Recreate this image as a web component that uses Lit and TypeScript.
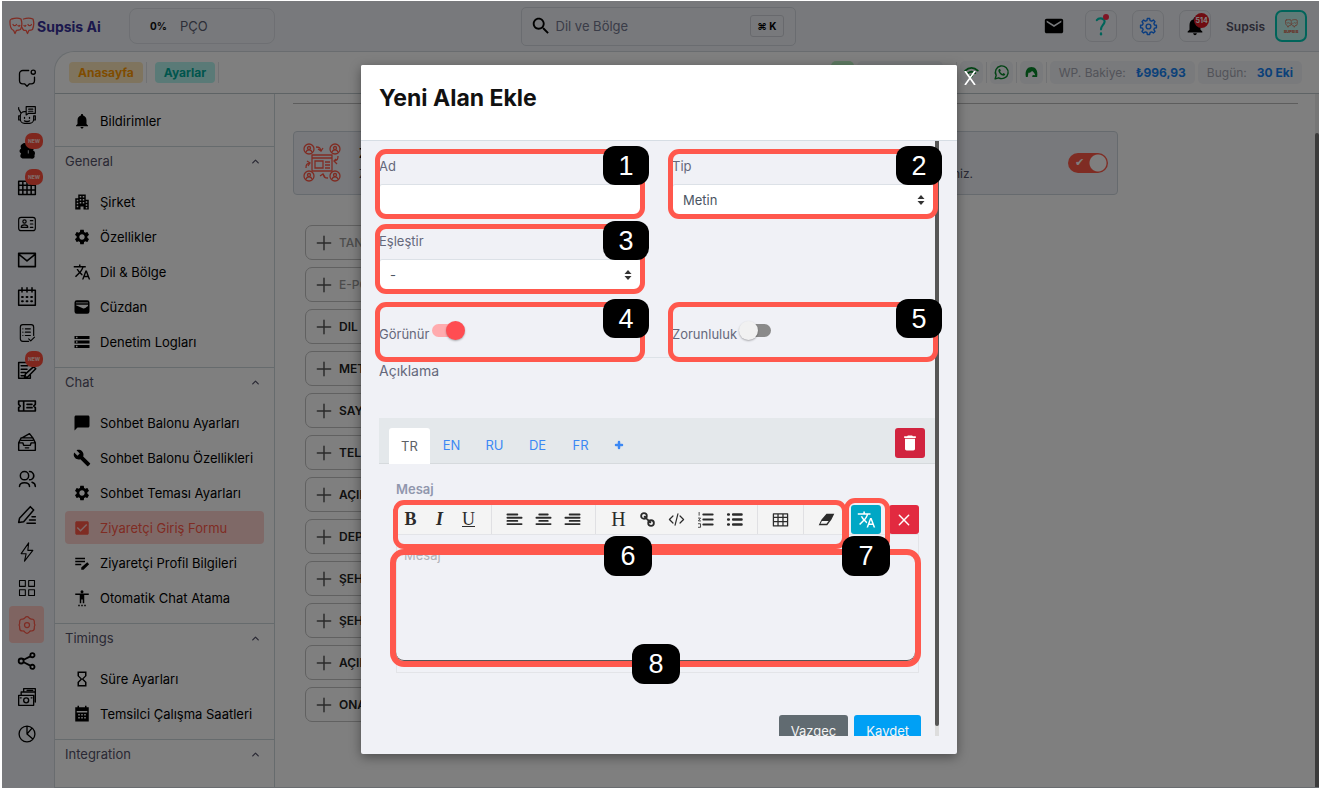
import { LitElement, html, svg, css } from "lit";
import { customElement, state } from "lit/decorators.js";

const fill = (d: string) => svg`<path fill="currentColor" fill-rule="evenodd" d=${d} />`;
const line = (d: string, w = 1.6) =>
  svg`<path fill="none" stroke="currentColor" stroke-width=${w} stroke-linecap="round" stroke-linejoin="round" d=${d} />`;

const GEAR =
  "M19.14 12.94c.04-.3.06-.61.06-.94 0-.32-.02-.64-.07-.94l2.03-1.58c.18-.14.23-.41.12-.61l-1.92-3.32c-.12-.22-.37-.29-.59-.22l-2.39.96c-.5-.38-1.03-.7-1.62-.94l-.36-2.54c-.04-.24-.24-.41-.48-.41h-3.84c-.24 0-.43.17-.47.41l-.36 2.54c-.59.24-1.13.57-1.62.94l-2.39-.96c-.22-.08-.47 0-.59.22L2.74 8.87c-.12.21-.08.47.12.61l2.03 1.58c-.05.3-.09.63-.09.94s.02.64.07.94l-2.03 1.58c-.18.14-.23.41-.12.61l1.92 3.32c.12.22.37.29.59.22l2.39-.96c.5.38 1.03.7 1.62.94l.36 2.54c.05.24.24.41.48.41h3.84c.24 0 .44-.17.47-.41l.36-2.54c.59-.24 1.13-.56 1.62-.94l2.39.96c.22.08.47 0 .59-.22l1.92-3.32c.12-.22.07-.47-.12-.61l-2.01-1.58zM12 15.6c-1.98 0-3.6-1.62-3.6-3.6s1.62-3.6 3.6-3.6 3.6 1.62 3.6 3.6-1.62 3.6-3.6 3.6z";
const GEAR_OUTLINE =
  "M9.500 3.500Q12 .5 14.500 3.500Q15.500 5 17.500 4.800Q21 5 20.800 8.500Q20.500 10 21.500 12Q20.500 14 20.800 15.500Q21 19 17.500 19.200Q15.500 19 14.500 20.500Q12 23.500 9.500 20.500Q8.500 19 6.500 19.200Q3 19 3.200 15.500Q3.500 14 2.500 12Q3.500 10 3.200 8.500Q3 5 6.500 4.800Q8.500 5 9.500 3.500zM15 12a3 3 0 1 1-6 0a3 3 0 0 1 6 0z";
const COG_OUTLINE =
  "M10.500 2h3l.5 2.500 2 .8 2.200-1.400 2 2-1.400 2.200.8 2 2.400.4v3l-2.400.5-.8 2 1.400 2.200-2 2-2.200-1.400-2 .8-.5 2.400h-3l-.5-2.400-2-.8-2.200 1.400-2-2 1.400-2.200-.8-2L2 13.500v-3l2.400-.4.8-2-1.400-2.200 2-2L8 5.300l2-.8zM15 12a3 3 0 1 1-6 0a3 3 0 0 1 6 0z";

const icons: Record<string, unknown> = {
  bell: fill("M12 22c1.1 0 2-.9 2-2h-4c0 1.1.89 2 2 2zm6-6v-5c0-3.07-1.64-5.64-4.5-6.32V4c0-.83-.67-1.5-1.5-1.5s-1.5.67-1.5 1.5v.68C7.63 5.36 6 7.92 6 11v5l-2 2v1h16v-1l-2-2z"),
  gear: fill(GEAR),
  gearOutline: line(GEAR_OUTLINE, 1.5),
  cogOutline: line(COG_OUTLINE, 1.8),
  translate: fill("M12.87 15.07l-2.54-2.51.03-.03c1.74-1.94 2.98-4.17 3.71-6.53H17V4h-7V2H8v2H1v1.99h11.17C11.5 7.92 10.44 9.75 9 11.35 8.07 10.32 7.3 9.19 6.69 8h-2c.73 1.63 1.73 3.17 2.98 4.56l-5.09 5.02L4 19l5-5 3.11 3.11.76-2.04zM18.5 10h-2L12 22h2l1.12-3h4.75L21 22h2l-4.5-12zm-2.62 7l1.62-4.33L19.12 17h-3.24z"),
  building: fill("M7 2h10v7h4v13h-7v-4h-4v4H3V7h4zM9 4v2h2V4zM13 4v2h2V4zM5 9v2h2V9zM9 8v2h2V8zM13 8v2h2V8zM5 13v2h2v-2zM9 12v2h2v-2zM13 12v2h2v-2zM17 11v2h2v-2zM5 17v2h2v-2zM17 15v2h2v-2zM17 18.500v2h2v-2z"),
  wallet: fill("M5 3h14a3 3 0 0 1 3 3v12a3 3 0 0 1-3 3H5a3 3 0 0 1-3-3V6a3 3 0 0 1 3-3zM4 9.500l9 4c2 1 3 0 7-3V9H4zM4 6v1h16V6z"),
  storage: fill("M2 20h20v-4H2v4zm2-3h2v2H4v-2zM2 4v4h20V4H2zm4 3H4V5h2v2zm-4 7h20v-4H2v4zm2-3h2v2H4v-2z"),
  chat: fill("M20 2H4c-1.1 0-2 .9-2 2v18l4-4h14c1.1 0 2-.9 2-2V4c0-1.1-.9-2-2-2z"),
  wrench: fill("M22.7 19l-9.1-9.1c.9-2.3.4-5-1.5-6.9-2-2-5-2.4-7.4-1.3L9 6 6 9 1.6 4.7C.4 7.1.9 10.1 2.9 12.1c1.9 1.9 4.6 2.4 6.9 1.5l9.1 9.1c.4.4 1 .4 1.4 0l2.3-2.3c.5-.4.5-1.1.1-1.4z"),
  check: fill("M19 3H5c-1.11 0-2 .9-2 2v14c0 1.1.89 2 2 2h14c1.11 0 2-.9 2-2V5c0-1.1-.89-2-2-2zm-9 14l-5-5 1.41-1.41L10 14.17l7.59-7.59L19 8l-9 9z"),
  editNote: fill("M3 5h13v2H3zM3 9h13v2H3zM3 13h8v2H3zM19 11l2.500 2.500L14 21h-3v-3z"),
  person: fill("M12 1.500a2 2 0 1 1 0 4a2 2 0 0 1 0-4zM3 6h18v2h-6v11h-2v-5h-2v5H9V8H3zM7 21h2v2H7zM11 21h2v2h-2zM15 21h2v2h-2z"),
  hourglass: fill("M6 2v6h.01L6 8.01 10 12l-4 4 .01.01H6V22h12v-5.99h-.01L18 16l-4-4 4-3.99-.01-.01H18V2H6zm10 14.5V20H8v-3.5l4-4 4 4zm-4-5l-4-4V4h8v3.5l-4 4z"),
  calendarFull: fill("M6 1h2v2h8V1h2v2h3v19H3V3h3zM5 8v2h14V8zM7 12v2h2v-2zM11 12v2h2v-2zM15 12v2h2v-2zM7 16v2h2v-2zM11 16v2h2v-2zM15 16v2h2v-2z"),
  trash: fill("M6 19c0 1.1.9 2 2 2h8c1.1 0 2-.9 2-2V7H6v12zM19 4h-3.5l-1-1h-5l-1 1H5v2h14V4z"),
  search: fill("M15.5 14h-.79l-.28-.27C15.41 12.59 16 11.11 16 9.5 16 5.91 13.09 3 9.5 3S3 5.91 3 9.5 5.91 16 9.5 16c1.61 0 3.09-.59 4.23-1.57l.27.28v.79l5 4.99L20.49 19l-4.99-5zm-6 0C7.01 14 5 11.99 5 9.5S7.01 5 9.5 5 14 7.01 14 9.5 11.99 14 9.5 14z"),
  mail: fill("M20 4H4c-1.1 0-1.99.9-1.99 2L2 18c0 1.1.9 2 2 2h16c1.1 0 2-.9 2-2V6c0-1.1-.9-2-2-2zm0 4l-8 5-8-5V6l8 5 8-5v2z"),
  chevron: line("M6 15l6-6 6 6", 2.8),
  plus: line("M12 2v20M2 12h20", 2.2),
  boldPlus: line("M12 6v12M6 12h12", 5),
  close: line("M5 5l14 14M19 5L5 19", 2.2),
  question: svg`${line("M7 5c3-4 11-2 9 3-1 3-4 4-4 8", 2.6)}${line("M12 21v1", 2.8)}`,
  whatsapp: svg`${line("M3 21l1.500-5a9 9 0 1 1 3.500 3.500z", 2)}${fill("M8.500 7c-2 2-.5 5 1.500 7s5 3.500 7 1.500l.2-1.500-2.500-1.200-1.200 1.200c-1.500-.5-3-2-3.500-3.300l1-1.200L10 7z")}`,
  wifi: svg`${line("M2 9c6-6 14-6 20 0M6 13c4-3 8-3 12 0", 3)}${fill("M12 14l3 3-3 4-3-4z")}`,
  headset: fill("M3 19C1 8 6 3 12 3s11 5 9 16h-8l1-3 4 .5c-1-3-2-5-5-7-2 2-4 3-6 3l-1 6.500z"),
  railChat: svg`${line("M14 3H7a4 4 0 0 0-4 4v8a4 4 0 0 0 4 4h2l3 3 3-3h2a4 4 0 0 0 4-4v-4")}${line("M22 5a2.500 2.500 0 1 1-5 0a2.500 2.500 0 0 1 5 0")}`,
  railBot: svg`${line("M10 8H9a5 5 0 0 0-5 5v4a5 5 0 0 0 5 5h6a5 5 0 0 0 5-5v-4M11 2h11v8h-8l-3 2zM14 5h5M14 7.500h5M2 3v2l3 5M4 13H2v5h2M20 13h2v5h-2", 1.4)}${line("M9 15v1M15 15v1M9 19c2 1 4 1 6 0", 1.6)}`,
  railBlob: fill("M6 4c3-3 6-1 7 2h5c3 0 3 4 1 5 3 1 3 4 2 6 1 3-2 5-4 4H8c-4 0-5-3-3-6-3-2-2-5 0-6-1-2-1-4 1-5zM13 11v4h1v-4z"),
  railTable: line("M2 5h20v16H2zM2 10h20M2 15.500h20M7 5v16M12 5v16M17 5v16", 1.800),
  railCard: line("M5 4h14a3 3 0 0 1 3 3v10a3 3 0 0 1-3 3H5a3 3 0 0 1-3-3V7a3 3 0 0 1 3-3zM11 9a2 2 0 1 1-4 0a2 2 0 0 1 4 0M5 16c0-4 8-4 8 0zM16 8h3M16 12h3M16 16h3", 1.4),
  railMail: line("M2 4h20v16H2zM2 5l10 8 10-8", 1.900),
  railCalendar: svg`${line("M2 4h20v18H2zM6 1v5M12 1v5M18 1v5", 1.800)}${line("M6 12h1M11.500 12h1M17 12h1M6 17h1M11.500 17h1M17 17h1", 2.4)}`,
  railList: line("M20 15V5a3 3 0 0 0-3-3H7a3 3 0 0 0-3 3v14a3 3 0 0 0 3 3h7M14 19l2.500 2.500L21 17M10 7h6M10 11h6M10 15h6M7 7h.1M7 11h.1M7 15h.1", 1.4),
  railNote: line("M14 3H2v19h14v-4M5 7h8M5 11h7M5 15h5M5 19h5M20 8l2.500 2.500L13 20l-4 1 1-4z", 1.800),
  railTicket: line("M2 6h20v4l-2 2 2 2v4H2v-4l2-2-2-2zM8 6v12M12 10h6M12 14h6", 2),
  railInbox: line("M2 13h5l1 3h8l1-3h5v9H2zM2 13l3-6 M22 13l-3-6M5 7l14 0M6 7l9-5 4 5M10 19h4M5 10h14", 1.700),
  railUsers: line("M14 8a5 5 0 1 1-10 0a5 5 0 0 1 10 0M3 21c0-6 12-6 12 0M15 3a5 5 0 0 1 0 10M18 4c3 3 3 6 0 8M18 16c3 1 4 3 4 5", 1.800),
  railPen: line("M2 21l1-5L16 2l4 4L8 20zM12 22h10M15 18h7M18 14h4", 1.800),
  railBolt: line("M14 1L5 14h6l-2 9 10-13h-6z", 1.300),
  railGrid: line("M3 3h7v7H3zM14 3h7v7h-7zM3 14h7v7H3zM14 14h7v7h-7z", 1.300),
  railShare: line("M8 12a3 3 0 1 1-6 0a3 3 0 0 1 6 0M21 5a2.500 2.500 0 1 1-5 0a2.500 2.500 0 0 1 5 0M21 19a2.500 2.500 0 1 1-5 0a2.500 2.500 0 0 1 5 0M8 10.500l8-4M8 13.500l8 4", 2.2),
  railCash: line("M2 10h18v12H2zM5 10V6h17v12M8 6V2h14v4M12 4h7M14 16a3 3 0 1 1-6 0a3 3 0 0 1 6 0M4 13h1M17 13h1", 1.600),
  railPie: line("M21.500 12a9.500 9.500 0 1 1-19 0a9.500 9.500 0 0 1 19 0M12 2.500V12l7 6M12 12l6-7", 1.600),
  alignLeft: line("M2 5h14M2 9.500h20M2 14h14M2 18.500h20", 2.6),
  alignCenter: line("M6 5h12M2 9.500h20M6 14h12M2 18.500h20", 2.6),
  alignRight: line("M8 5h14M2 9.500h20M8 14h14M2 18.500h20", 2.6),
  link: line("M11 7a4 4 0 1 1-8 0a4 4 0 0 1 8 0M21 17a4 4 0 1 1-8 0a4 4 0 0 1 8 0M8 8l8 8", 2.6),
  code: line("M7 7l-5 5 5 5M17 7l5 5-5 5M14 4l-4 16", 1.700),
  ordered: svg`${line("M9 5h13M9 12h13M9 19h13", 3)}${line("M3 2v4M2 10h3l-3 4h3M2 18h3v5H2", 1.2)}`,
  bullets: line("M10 5h12M10 12h12M10 19h12M3 5h1M3 12h1M3 19h1", 3.4),
  table: line("M2 4h20v17H2zM2 9h20M2 15h20M8.500 4v17M15.500 4v17", 1.800),
  eraser: svg`${fill("M12 4h11l-4 8-6 8H1l4-8zM5.500 14l-2 4H12l3-4z")}`,
};

const icon = (name: string, size = 18) =>
  html`<svg class="icon" width=${size} height=${size} viewBox="0 0 24 24" aria-hidden="true">${icons[name]}</svg>`;

const faces = svg`<g fill="none" stroke="currentColor" stroke-width="1.300" stroke-linecap="round" stroke-linejoin="round">
  <path d="M2.500 1.500C5 .8 10 .5 12 1.500c1 3 .8 8-.5 10.500-1.500.6-2.500.8-4 .8L6 16l-1.500-3.200C2 12 .8 9 1 3.500c0-1 .5-1.700 1.500-2zM4 7c.8 1.600 2.600 1.600 3.400 0M9 8c.5.8 1.200.8 1.800 0"/>
  <path d="M14.500 1.500c3-1 7-1 9.500 0 1 3 1 7-.5 10.500-1 .6-2 .8-3.500.8L18.500 16 17 12.800h-2c-1-.5-1.500-1.500-2-2.800M15 8c.5.8 1.200.8 1.800 0M19 7c.8 1.600 2.600 1.600 3.400 0"/></g>`;

const rail: [string, boolean?][] = [
  ["railChat"], ["railBot"], ["railBlob", true], ["railTable", true], ["railCard"], ["railMail"],
  ["railCalendar"], ["railList"], ["railNote", true], ["railTicket"], ["railInbox"], ["railUsers"],
  ["railPen"], ["railBolt"], ["railGrid"], ["gearOutline"], ["railShare"], ["railCash"], ["railPie"],
];

const menu: { title?: string; items: [string, string][] }[] = [
  { items: [["bell", "Bildirimler"]] },
  {
    title: "General",
    items: [["building", "Şirket"], ["gear", "Özellikler"], ["translate", "Dil & Bölge"], ["wallet", "Cüzdan"], ["storage", "Denetim Logları"]],
  },
  {
    title: "Chat",
    items: [
      ["chat", "Sohbet Balonu Ayarları"], ["wrench", "Sohbet Balonu Özellikleri"], ["gear", "Sohbet Teması Ayarları"],
      ["check", "Ziyaretçi Giriş Formu"], ["editNote", "Ziyaretçi Profil Bilgileri"], ["person", "Otomatik Chat Atama"],
    ],
  },
  { title: "Timings", items: [["hourglass", "Süre Ayarları"], ["calendarFull", "Temsilci Çalışma Saatleri"]] },
  { title: "Integration", items: [["gear", ""]] },
];

const formRows = ["TANIM", "E-POSTA", "DIL", "METİN", "SAYI", "TELEFON", "AÇIKLAMA", "DEPARTMAN", "ŞEHİR", "ŞEHİR", "AÇIKLAMA", "ONAY"];

@customElement("app-root")
export class AppRoot extends LitElement {
  @state() private lang = "TR";

  static styles = css`
    :host { display: block; height: 100vh; font-family: Inter, "Open Sans", sans-serif; font-size: 13px; color: #000; background: #fff; }
    * { box-sizing: border-box; }
    button, input, select, textarea { font: inherit; color: inherit; margin: 0; }
    button { padding: 0; border: 0; background: none; cursor: pointer; }
    a { color: inherit; text-decoration: none; }
    .icon { display: block; flex: none; }
    .screen { height: 100%; padding: 1px 1px 2px 2px; }
    .shell { position: relative; height: 100%; overflow: hidden; display: grid; grid-template: 50px minmax(0, 1fr) / 52px minmax(0, 1fr); background: #f0f3f8; }

    .top { grid-column: 1 / -1; display: grid; grid-template-columns: 1fr auto 1fr; align-items: center; padding: 0 12px 0 7px; }
    .brand { display: flex; align-items: center; gap: 2px; }
    .logo { color: #ff5847; }
    .brand > b { font-size: 14px; font-weight: 700; color: #37309a; width: 90px; white-space: nowrap; }
    .pill { display: flex; align-items: center; gap: 13px; width: 146px; height: 36px; padding-left: 20px; border: 1px solid #dcdfe6; border-radius: 8px; color: #5a5d70; }
    .pill b { font-size: 10px; color: #111; }
    .search { display: flex; align-items: center; gap: 4px; width: 275px; height: 39px; padding: 0 11px 0 8px; border: 1px solid #d5d8e0; border-radius: 5px; }
    .search input { flex: 1; min-width: 0; border: 0; padding: 0; background: none; outline: 0; }
    .search input::placeholder { color: #747890; opacity: 1; }
    .search kbd { font: 700 10px Inter, "DejaVu Sans", sans-serif; border: 1px solid #d0d3db; border-radius: 3px; padding: 4px 6px; }
    .tools { display: flex; align-items: center; justify-content: flex-end; gap: 15px; }
    .tool { position: relative; width: 32px; height: 32px; display: grid; place-items: center; border: 1px solid #d8dbe2; border-radius: 7px; }
    .plain { border: 0; }
    .teal { color: #00c8b4; }
    .blue { color: #1478ff; }
    .dot { position: absolute; top: 3px; right: 7px; width: 6px; height: 6px; border-radius: 50%; background: #ff2d4b; }
    .count { position: absolute; top: 2px; right: 1px; width: 15px; height: 15px; border-radius: 50%; background: #e01923; color: #fff; font-size: 7px; font-weight: 700; line-height: 15px; text-align: center; }
    .user { display: flex; align-items: center; gap: 10px; font-size: 12px; font-weight: 600; color: #545269; }
    .avatar { width: 32px; height: 32px; display: grid; place-content: center; justify-items: center; gap: 1px; border: 2px solid #00c8b4; border-radius: 7px; background: #c0f7f0; color: #d2543c; font-size: 4px; font-weight: 800; }

    .rail { display: flex; flex-direction: column; padding: 9px 10px 36px 7px; }
    .rail a { flex: 1; position: relative; display: grid; place-items: center; border-radius: 4px; }
    .rail a.on { background: #ffc8c2; color: #ff5847; }
    .seal { position: absolute; top: 0; right: 1px; width: 18px; height: 16px; border-radius: 7px; background: #ff4f3d; color: #ffd3cd; font-size: 5px; font-weight: 800; line-height: 16px; text-align: center; }

    .panel { display: grid; grid-template: 42px minmax(0, 1fr) / 220px minmax(0, 1fr); background: #fff; border: 1px solid #d2d9de; border-right: 0; border-radius: 20px 0 0 0; overflow: hidden; }
    .crumbs { grid-column: 1 / -1; display: flex; align-items: center; gap: 3px; padding: 0 17px 0 14px; border-bottom: 1px solid #bcc6ca; }
    .tag { font-size: 12px; font-weight: 700; line-height: 21px; padding: 0 9px; border-radius: 4px; background: #ffe8bd; color: #ff9800; }
    .tag.green { background: #b4f5ee; color: #00ab9b; }
    .sep { width: 1px; height: 21px; background: #e2e4e9; margin-right: 5px; }
    .status { margin-left: auto; display: flex; align-items: center; gap: 3px; }
    .status .sep { margin: 0; }
    .chip { display: flex; align-items: center; justify-content: center; gap: 10px; min-width: 23px; height: 23px; border-radius: 5px; background: #f3f4f8; color: #a4a7b2; font-size: 12px; white-space: nowrap; }
    .chip.text { padding: 0 9px; }
    .chip b { color: #1782f2; }
    .chip.dark { color: #07882b; }
    .chip.online { background: #bdf4c4; color: #07882b; }
    .chip.wide { width: 86px; margin-right: 10px; }

    .menu { border-right: 1px solid #ccd6da; overflow: hidden; }
    .group { padding-bottom: 9px; border-bottom: 1px solid #ccd6da; }
    .group h2 { margin: 0; font-size: 13px; font-weight: 400; }
    .group h2 button { width: 100%; height: 28px; display: flex; align-items: center; justify-content: space-between; padding: 0 13px 0 10px; color: #545269; }
    .group ul { list-style: none; margin: 0; padding: 10px 10px 0; display: grid; gap: 2px; }
    .group li a { display: flex; align-items: center; gap: 9px; height: 33px; padding-left: 8px; border-radius: 4px; white-space: nowrap; }
    .group li a.on { background: #ffd2cf; color: #ff5847; }

    .content { position: relative; padding: 9px 16px 0 18px; }
    .rule { border: 0; border-top: 1px solid #bbb; margin: 0 5px 27px 0; }
    .card { display: flex; align-items: center; max-width: 825px; height: 64px; padding: 0 9px; border: 1px solid #cdd5dc; border-radius: 4px; background: #f0f3f8; gap: 18px; }
    .flow { color: #ff5847; }
    .about { width: 614px; display: grid; gap: 3px; line-height: 17px; }
    .about p { margin: 0; display: flex; justify-content: space-between; color: #545269; font-size: 12px; }
    .switch-on { margin-left: auto; position: relative; display: block; }
    .switch-on input { appearance: none; display: block; margin: 0; width: 40px; height: 20px; border-radius: 10px; background: radial-gradient(circle at 30px 10px, #fff 8px, transparent 9px) #ff5847; }
    .switch-on span { position: absolute; left: 7px; top: 2px; color: #fff; font: 11px/16px "DejaVu Sans", sans-serif; }
    .rows { display: grid; gap: 7px; margin: 30px 12px 0; max-width: 600px; }
    .row { display: flex; align-items: center; gap: 7px; height: 35px; padding: 0 10px; border: 1px solid #c2c2c2; border-radius: 7px; font-size: 12px; font-weight: 600; color: #222; }
    .row .icon { color: #555; }
    .row.off { color: #999; font-weight: 500; }
    .bar { position: absolute; top: 0; right: 0; bottom: 0; width: 4px; background: #ededed; padding-top: 39px; }
    .bar i { display: block; height: 100%; background: #777; border-radius: 2px 2px 0 0; }

    .backdrop { position: absolute; inset: 0; background: rgba(0, 0, 0, 0.5); display: grid; justify-content: center; padding: 64px 19px 34px 16px; grid-template-columns: minmax(0, 596px); }
    .modal { position: relative; display: flex; flex-direction: column; min-height: 0; padding-bottom: 18px; border-radius: 2px; background: #f0f1f6; box-shadow: 0 3px 12px rgba(0, 0, 0, 0.4); }
    .modal > header { height: 76px; flex: none; padding: 18px 18px 0; background: #fff; border-bottom: 1px solid #d6dde4; border-radius: 2px 2px 0 0; }
    h1 { margin: 0; font-size: 23px; line-height: 30px; font-weight: 700; color: #111; }
    .shut { position: absolute; left: 100%; top: 6px; margin-left: 7px; color: #fff; }
    .body { flex: 1; min-height: 0; overflow: hidden; padding: 16px 22px 0 18px; color: #65687b; }
    .thumb { position: absolute; right: 18px; top: 76px; bottom: 18px; width: 4px; background: #ddd; padding-bottom: 10px; }
    .thumb i { display: block; height: 100%; background: #565656; border-radius: 0 0 2px 2px; }
    .fields { display: grid; grid-template-columns: 1fr 1fr; gap: 16px 30px; }
    .field { position: relative; display: grid; gap: 9px; line-height: 18px; }
    .left { grid-column: 1; }
    .box { width: 100%; height: 32px; border: 1px solid #dce1e7; border-radius: 3px; background: #fff; padding: 0 10px; outline: 0; color: #4b5563; }
    select.box { appearance: none; }
    .arrows { position: absolute; right: 10px; bottom: 10px; color: #333; pointer-events: none; }
    .toggle { position: relative; display: flex; align-items: flex-start; gap: 2px; height: 47px; margin-top: 3px; line-height: 18px; }
    .toggle label { padding-top: 15px; }
    .toggle input { appearance: none; position: relative; width: 34px; height: 20px; margin: 10px 0 0; }
    .toggle input::before { content: ""; position: absolute; left: 6px; top: 4px; width: 26px; height: 13px; border-radius: 7px; background: #8a8a8a; }
    .toggle input::after { content: ""; position: absolute; left: 0; top: 1px; width: 19px; height: 19px; border-radius: 50%; background: #f1f1f1; box-shadow: 0 1px 2px rgba(0, 0, 0, 0.3); }
    .toggle input:checked::before { left: 1px; background: #ffabae; }
    .toggle input:checked::after { left: 15px; background: #ff4d52; }
    .split { border: 0; border-top: 1px solid #dde2e7; margin: 0 0 4px; }
    .desc { margin: 0 0 38px; line-height: 18px; font-size: 14px; }
    .tabs { display: flex; align-items: flex-end; height: 46px; padding: 0 10px; background: #e4e8eb; border-bottom: 1px solid #d6dadd; }
    .tab { height: 36px; min-width: 43px; color: #3c88f4; border-radius: 3px 3px 0 0; display: grid; place-items: center; }
    .tab.on { min-width: 41px; margin-bottom: -1px; background: #fff; color: #5d6166; }
    .tab:last-of-type { min-width: 34px; }
    .square { width: 30px; height: 30px; display: grid; place-items: center; border-radius: 3px; background: #e22a40; color: #fff; }
    .del { margin: 0 0 5px auto; background: #d1243f; }
    .pane { padding: 16px 16px 0 17px; }
    .pane > label { display: block; margin-bottom: 7px; line-height: 18px; font-weight: 600; color: #9097ad; }
    .line { display: flex; gap: 8px; }
    .toolbar { position: relative; display: flex; height: 29px; margin-right: auto; background: #f4f4f4; color: #2b2b2b; }
    .set { display: flex; padding: 0 8px; border-right: 1px solid #e0e0e3; }
    .set:first-child { padding-left: 0; }
    .set:nth-child(5) { padding-right: 2px; border: 0; }
    .set button { width: 29px; display: grid; place-items: center; font: 700 18px "Liberation Serif", serif; }
    .set .italic { font-style: italic; }
    .set .under { font-weight: 400; text-decoration: underline; }
    .set .head { font-weight: 400; font-size: 20px; }
    .tr { position: relative; }
    .tr .square { background: #00a7c5; }
    .line .square { height: 29px; }
    .editor { border: 1px solid #e3e4e8; padding: 10px 0 8px; }
    .write { position: relative; height: 119px; }
    .write textarea { display: block; width: 100%; height: 100%; padding: 2px 7px; line-height: 16px; border: 0; outline: 0; background: none; resize: none; }
    .write textarea::placeholder { color: #b0b2b8; opacity: 1; }
    .actions { display: flex; justify-content: flex-end; gap: 6px; margin-top: 42px; padding-right: 14px; }
    .actions button { height: 32px; padding: 0 12px; border-radius: 3px; background: #616b71; color: #f4f4f4; }
    .actions .save { background: #00a0f5; }

    .frame { position: absolute; z-index: 1; inset: -8px -3px -3px -4px; border: 5px solid #ff584d; border-radius: 11px; pointer-events: none; }
    .badge { position: absolute; z-index: 3; right: -7px; top: -11px; width: 46px; height: 39px; border-radius: 12px; background: #000; color: #fff; font: 27px/40px "Liberation Sans", Arial, sans-serif; text-align: center; pointer-events: none; }
    .toggle .frame { bottom: -5px; }
    .toolbar .frame { inset: -5px -4px -15px -3px; }
    .toolbar .badge { right: 191px; top: 31px; }
    .tr .frame { inset: -7px -9px -17px -7px; }
    .tr .badge { right: -9px; top: 31px; }
    .write .frame { inset: 4px -3px -3px -7px; border-width: 6px; border-radius: 14px; box-shadow: inset 0 -1px 0 #555; }
    .write .badge { top: auto; bottom: -20px; right: 238px; }
    .toolbar .badge, .tr .badge, .write .badge { width: 48px; height: 40px; }
  `;

  private mark(n: number) {
    return html`<span class="frame"></span><span class="badge">${n}</span>`;
  }

  private arrows() {
    return html`<svg class="arrows" width="8" height="12" viewBox="0 0 8 12"><path fill="currentColor" d="M4 1l3.500 4h-7zM4 11l3.500-4h-7z" /></svg>`;
  }

  private tool(name: string, label: string) {
    return html`<button aria-label=${label}>${icon(name, 17)}</button>`;
  }

  private header() {
    return html`<header class="top">
      <div class="brand">
        <svg class="logo" width="26" height="18" viewBox="0 0 26 17">${faces}</svg>
        <b>Supsis Ai</b>
        <div class="pill"><b>0%</b>PÇO</div>
      </div>
      <label class="search">${icon("search", 22)}<input aria-label="Ara" placeholder="Dil ve Bölge" /><kbd>⌘ K</kbd></label>
      <div class="tools">
        <button class="tool plain" aria-label="Posta">${icon("mail", 22)}</button>
        <button class="tool teal" aria-label="Yardım">${icon("question", 20)}<span class="dot"></span></button>
        <button class="tool blue" aria-label="Ayarlar">${icon("cogOutline", 19)}</button>
        <button class="tool" aria-label="Bildirimler">${icon("bell", 22)}<span class="count">514</span></button>
        <div class="user">Supsis
          <span class="avatar"><svg width="13" height="9" viewBox="0 0 26 17">${faces}</svg>SUPSIS</span>
        </div>
      </div>
    </header>`;
  }

  private sidebar() {
    return html`<nav class="menu">${menu.map(
      (g) => html`<section class="group">
        ${g.title ? html`<h2><button>${g.title}${icon("chevron", 11)}</button></h2>` : null}
        <ul>${g.items.map(
          ([ic, label]) => html`<li><a href="#" class=${ic === "check" ? "on" : ""}>${icon(ic)}${label}</a></li>`
        )}</ul>
      </section>`
    )}</nav>`;
  }

  private page() {
    return html`<main class="content">
      <hr class="rule" />
      <section class="card">
        <svg class="flow" width="38" height="40" viewBox="0 0 38 40" fill="none" stroke="currentColor" stroke-width="1.300">
          <circle cx="6" cy="6" r="5" /><circle cx="32" cy="6" r="5" /><circle cx="6" cy="33" r="5" /><circle cx="32" cy="33" r="5" />
          <circle cx="6" cy="5" r="1.500" /><circle cx="32" cy="5" r="1.500" /><circle cx="6" cy="32" r="1.500" /><circle cx="32" cy="32" r="1.500" />
          <path d="M3 9c1-3 5-3 6 0M29 9c1-3 5-3 6 0M3 36c1-3 5-3 6 0M29 36c1-3 5-3 6 0M9 12h20v16H9zM9 15h20M12 18h8v7h-8zM22 19h5M22 22h5M22 25h5M13 4c4 0 4 1 5 4M15 6l3 2 2-3M25 35c-4 0-4-1-5-4M17 33l3-2 2 3M3 25c0-4 1-4 4-5M4 18l3 2-2 3M35 13c0 4-1 4-4 5M34 21l-3-3 2-2" />
        </svg>
        <div class="about">
          <b>Ziyaretçi Giriş Formu</b>
          <p><span>Ziyaretçi giriş formunu</span><span>düzenleyebilirsiniz.</span></p>
        </div>
        <label class="switch-on"><input type="checkbox" checked aria-label="Ziyaretçi giriş formu" /><span>✔</span></label>
      </section>
      <div class="rows">${formRows.map(
        (r, i) => html`<button class="row ${i < 2 ? "off" : ""}">${icon("plus", 16)}${r}</button>`
      )}</div>
      <div class="bar"><i></i></div>
    </main>`;
  }

  private modal() {
    return html`<div class="backdrop"><section class="modal" role="dialog" aria-labelledby="title">
      <header><h1 id="title">Yeni Alan Ekle</h1></header>
      <button class="shut" aria-label="Kapat">
        <svg class="icon" width="12" height="14" viewBox="0 0 12 14" stroke="currentColor" stroke-width="1.700" fill="none"><path d="M1 0l10 14M11 0L1 14" /></svg>
      </button>
      <div class="body">
        <div class="fields">
          <div class="field"><label for="ad">Ad</label><input class="box" id="ad" />${this.mark(1)}</div>
          <div class="field"><label for="tip">Tip</label><select class="box" id="tip"><option>Metin</option></select>${this.arrows()}${this.mark(2)}</div>
          <div class="field left"><label for="esle">Eşleştir</label><select class="box" id="esle"><option>-</option></select>${this.arrows()}${this.mark(3)}</div>
          <div class="toggle left"><label for="gor">Görünür</label><input type="checkbox" id="gor" checked />${this.mark(4)}</div>
          <div class="toggle"><label for="zor">Zorunluluk</label><input type="checkbox" id="zor" />${this.mark(5)}</div>
        </div>
        <hr class="split" />
        <p class="desc">Açıklama</p>
        <div class="tabs">
          ${["TR", "EN", "RU", "DE", "FR"].map(
            (l) => html`<a href="#" class="tab ${l === this.lang ? "on" : ""}" @click=${() => (this.lang = l)}>${l}</a>`
          )}
          <a href="#" class="tab" aria-label="Dil ekle">${icon("boldPlus", 12)}</a>
          <button class="square del" aria-label="Sil">${icon("trash", 20)}</button>
        </div>
        <div class="pane">
          <label for="mesaj">Mesaj</label>
          <div class="line">
            <div class="toolbar">
              <div class="set"><button>B</button><button class="italic">I</button><button class="under">U</button></div>
              <div class="set">${this.tool("alignLeft", "Sola hizala")}${this.tool("alignCenter", "Ortala")}${this.tool("alignRight", "Sağa hizala")}</div>
              <div class="set">
                <button class="head">H</button>${this.tool("link", "Bağlantı")}${this.tool("code", "Kod")}${this.tool("ordered", "Numaralı liste")}${this.tool("bullets", "Liste")}
              </div>
              <div class="set">${this.tool("table", "Tablo")}</div>
              <div class="set">${this.tool("eraser", "Temizle")}</div>
              ${this.mark(6)}
            </div>
            <div class="tr"><button class="square" aria-label="Çevir">${icon("translate", 19)}</button>${this.mark(7)}</div>
            <button class="square" aria-label="Kaldır">${icon("close", 16)}</button>
          </div>
          <div class="editor"><div class="write"><textarea id="mesaj" placeholder="Mesaj"></textarea>${this.mark(8)}</div></div>
        </div>
        <div class="actions"><button>Vazgeç</button><button class="save">Kaydet</button></div>
      </div>
      <div class="thumb"><i></i></div>
    </section></div>`;
  }

  render() {
    return html`<div class="screen"><div class="shell">
      ${this.header()}
      <nav class="rail">${rail.map(
        ([n, fresh]) => html`<a href="#" class=${n === "gearOutline" ? "on" : ""}>${icon(n, 20)}${fresh ? html`<span class="seal">NEW</span>` : null}</a>`
      )}</nav>
      <div class="panel">
        <div class="crumbs">
          <a href="#" class="tag">Anasayfa</a><span class="sep"></span><a href="#" class="tag green">Ayarlar</a><span class="sep"></span>
          <div class="status">
            <span class="chip online">${icon("boldPlus", 12)}</span><span class="chip wide"></span><span class="sep"></span>
            <span class="chip dark">${icon("wifi", 15)}</span><span class="sep"></span>
            <span class="chip dark">${icon("whatsapp", 17)}</span><span class="sep"></span>
            <span class="chip dark">${icon("headset", 15)}</span><span class="sep"></span>
            <span class="chip text">WP. Bakiye: <b>₺996,93</b></span><span class="chip text">Bugün: <b>30 Eki</b></span>
          </div>
        </div>
        ${this.sidebar()}${this.page()}
      </div>
      ${this.modal()}
    </div></div>`;
  }
}
